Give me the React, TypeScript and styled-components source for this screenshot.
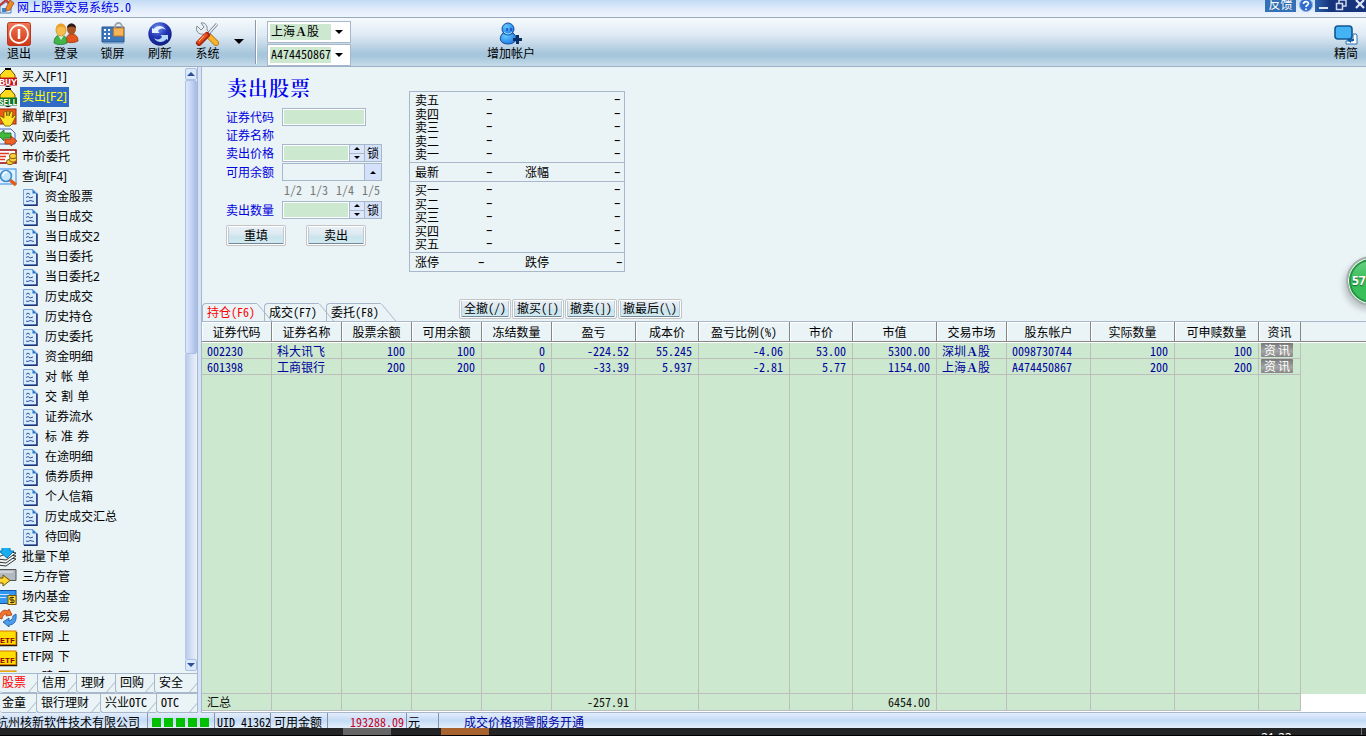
import React from 'react';
import styled, { createGlobalStyle, css } from 'styled-components';

const Global = createGlobalStyle`
  * { box-sizing: border-box; }
  body { margin: 0; overflow: hidden; }
`;

const line = '#a9b7ca';
const panel = '#eaf3f6';
const green = '#cce8cf';

const Page = styled.div`
  position: relative;
  width: 1366px;
  height: 736px;
  overflow: hidden;
  display: flex;
  flex-direction: column;
  background: ${panel};
  color: #000;
  font: 12px/16px 'Noto Sans CJK SC', sans-serif;
  white-space: pre;
`;

const Mono = styled.span`
  font-family: 'Noto Sans Mono CJK SC', 'Liberation Mono', monospace;
  line-height: 0;
`;
const WideLetter = styled.b`
  font-family: 'Noto Serif CJK SC', serif;
  line-height: 0;
`;

/* Half-width runs take exactly half the advance of a Chinese character. */
function T({ s }: { s: string }) {
  return (
    <>
      {s.split(/([\x20-\x7e]+|Ａ)/).map((p, i) => {
        if (i % 2 === 0) return p;
        return p === 'Ａ' ? <WideLetter key={i}>{p}</WideLetter> : <Mono key={i}>{p}</Mono>;
      })}
    </>
  );
}

/* ---------- title bar ---------- */
const TitleBar = styled.header`
  height: 18px;
  flex: none;
  display: flex;
  align-items: flex-start;
  background: linear-gradient(#c3dbf6, #dfebfb 50%, #f0f5fd);
  border-bottom: 1px solid #97a9bd;
  color: #0000e6;
`;
const TitleText = styled.div`
  flex: 1;
  line-height: 13px;
  margin-left: 2px;
`;
const Feedback = styled.div`
  width: 31px;
  height: 12px;
  overflow: hidden;
  background: #3470b4;
  color: #fff;
  text-align: center;
  line-height: 8px;
`;
const HelpIcon = styled.svg`
  margin: 0 2px 0 3px;
`;
const WindowButtons = styled.svg`
  background: linear-gradient(90deg, #2b62ac, #16347c 30%);
`;

/* ---------- toolbar ---------- */
const Toolbar = styled.nav`
  height: 49px;
  flex: none;
  display: flex;
  align-items: flex-start;
  background: linear-gradient(#f6fafd, #dfeaf4 35%, #a5c5db 75%, #a9c8dd 82%, #c6dbe9);
  border-bottom: 1px solid #9db0c8;
`;
const Tool = styled.div<{ $w: number }>`
  width: ${(p) => p.$w}px;
  padding-top: 4px;
  display: flex;
  flex-direction: column;
  align-items: center;
  svg { flex: none; }
  span { line-height: 14px; }
`;
const ToolSep = styled.div`
  width: 2px;
  height: 44px;
  margin: 2px 10px 0 11px;
  background: #8b99a8;
  border-right: 1px solid #fff;
`;
const Drop = styled.i<{ $size?: number; $up?: boolean; $color?: string }>`
  width: 0;
  height: 0;
  border: ${(p) => p.$size ?? 4}px solid transparent;
  ${(p) =>
    p.$up
      ? css`border-top: 0; border-bottom-color: ${p.$color ?? '#000'};`
      : css`border-bottom: 0; border-top-color: ${p.$color ?? '#000'};`}
`;
const DropSlot = styled.div`
  padding: 21px 0 0 4px;
`;
const Combos = styled.div`
  display: flex;
  flex-direction: column;
  gap: 1px;
  padding-top: 3px;
  width: 84px;
`;
const Combo = styled.div`
  height: 22px;
  display: flex;
  align-items: center;
  gap: 4px;
  padding-left: 2px;
  background: #fff;
  border: 1px solid ${line};
`;
const ComboText = styled.div`
  width: 61px;
  height: 16px;
  line-height: 14px;
  padding-left: 1px;
  background: ${green};
`;
const Gap = styled.div<{ $w?: number }>`
  ${(p) => (p.$w ? css`width: ${p.$w}px;` : css`flex: 1;`)}
`;

/* ---------- sidebar ---------- */
const Body = styled.div`
  flex: 1;
  min-height: 0;
  display: flex;
`;
const Sidebar = styled.aside`
  width: 197px;
  flex: none;
  display: flex;
  flex-direction: column;
`;
const TreeArea = styled.div`
  height: 606px;
  display: flex;
`;
const Tree = styled.div`
  flex: 1;
  height: 605px;
  overflow: hidden;
  font-family: 'Noto Sans', 'Noto Sans CJK SC', sans-serif;
`;
const Node = styled.div<{ $child?: boolean }>`
  height: 20px;
  display: flex;
  align-items: center;
  padding-left: ${(p) => (p.$child ? 23 : 0)}px;
  gap: ${(p) => (p.$child ? 5 : 2)}px;
  svg { flex: none; }
`;
const NodeText = styled.span<{ $on?: boolean }>`
  height: 20px;
  line-height: 20px;
  padding: 0 2px;
  word-spacing: 1px;
  ${(p) => p.$on && css`background: #316ac5; color: #ff0;`}
`;
const Scroll = styled.div`
  width: 12px;
  margin: 1px 0 2px;
  display: flex;
  flex-direction: column;
  background: linear-gradient(90deg, #e6ecf8, #f6f8fd);
`;
const ScrollBtn = styled.div`
  height: 12px;
  display: flex;
  align-items: center;
  justify-content: center;
  background: #dbe7fa;
  border: 1px solid #a9bfe3;
  border-radius: 2px;
`;
const Thumb = styled.div`
  height: 274px;
  background: linear-gradient(90deg, #dce8fb, #c3d3f4 55%, #a9bce4);
  border: 1px solid #a9bfe3;
  border-radius: 2px;
`;
const TrackFill = styled.div`
  flex: 1;
  background: linear-gradient(90deg, #b6c6ea, #d9e3f6 60%, #eaf0fb);
`;
const SideTabs = styled.div`
  height: 20px;
  display: flex;
  overflow: hidden;
  border-top: 1px solid ${line};
`;
const SideTab = styled.div<{ $w: number; $on?: boolean; $first?: boolean }>`
  position: relative;
  flex: none;
  width: ${(p) => p.$w}px;
  padding-left: ${(p) => (p.$first ? 2 : 4)}px;
  line-height: 16px;
  color: ${(p) => (p.$on ? '#f00' : '#000')};
  border-left: ${(p) => (p.$first ? 0 : 1)}px solid ${line};
  border-bottom: 1px solid ${line};
  border-bottom-left-radius: 3px;
  &::after {
    content: '';
    position: absolute;
    right: 4px;
    bottom: -1px;
    height: 11px;
    border-left: 1px solid ${line};
    transform: skewX(-40deg);
  }
`;
const Splitter = styled.div`
  width: 5px;
  flex: none;
  background: #d5e3fa;
  border-left: 1px solid ${line};
  border-right: 1px solid ${line};
`;

/* ---------- order form ---------- */
const Main = styled.main`
  flex: 1;
  min-width: 0;
  display: flex;
  flex-direction: column;
`;
const Top = styled.section`
  height: 232px;
  display: flex;
  align-items: flex-start;
`;
const Form = styled.div`
  width: 207px;
  padding: 9px 0 0 24px;
`;
const FormTitle = styled.h1`
  margin: 0 0 0 1px;
  height: 32px;
  font: 600 20px/24px 'Noto Serif CJK SC', 'Noto Sans CJK SC', serif;
  letter-spacing: 1px;
  color: #0000f0;
`;
const FormRow = styled.div<{ $h?: number }>`
  height: ${(p) => p.$h ?? 18}px;
  display: flex;
  align-items: center;
`;
const Label = styled.label`
  width: 56px;
  height: 18px;
  line-height: 17px;
  color: #0000e0;
`;
const Field = styled.div<{ $w: number; $plain?: boolean }>`
  width: ${(p) => p.$w}px;
  height: 18px;
  border: 1px solid ${line};
  background: ${(p) => (p.$plain ? panel : green)};
  box-shadow: ${(p) => (p.$plain ? 'none' : 'inset 0 0 0 1px #fff')};
`;
const Spin = styled.div`
  width: 15px;
  height: 18px;
  display: flex;
  flex-direction: column;
  border: 1px solid ${line};
  border-left: 0;
  background: #dce7fb;
`;
const SpinHalf = styled.div`
  flex: 1;
  display: flex;
  align-items: center;
  justify-content: center;
  & + & { border-top: 1px solid ${line}; }
`;
const Lock = styled.div`
  width: 17px;
  height: 18px;
  display: flex;
  align-items: center;
  justify-content: center;
  line-height: 14px;
  background: #d3e1fa;
  border: 1px solid ${line};
  border-left: 0;
`;
const Ratios = styled.div`
  height: 19px;
  padding-left: 58px;
  display: flex;
  gap: 8px;
  color: #777;
  ${Mono} { line-height: 16px; }
`;
const FormButtons = styled.div`
  display: flex;
  gap: 20px;
  margin-top: 6px;
`;
const Button = styled.button<{ $w: number; $h: number }>`
  width: ${(p) => p.$w}px;
  height: ${(p) => p.$h}px;
  padding: 0 0 2px;
  font: inherit;
  line-height: 14px;
  white-space: pre;
  color: #000;
  background: linear-gradient(#e9f0f6, #dbe8f0 48%, #c9e4ec 55%, #d4ebf0);
  border: 1px solid #c4c4c4;
  border-radius: 2px;
  box-shadow: inset 0 0 0 1px #fff, inset 2px 0 0 #b9cbd9, inset -2px 0 0 #b9cbd9, inset 0 -2px 0 #71889c;
`;

/* ---------- quote box ---------- */
const Quote = styled.div`
  width: 216px;
  height: 181px;
  margin-top: 24px;
  border: 1px solid ${line};
`;
const QuoteGroup = styled.div<{ $h: number }>`
  height: ${(p) => p.$h}px;
  padding: 1px 0;
  & + & { border-top: 1px solid ${line}; }
`;
const QuoteRow = styled.div<{ $h: number; $edge?: boolean }>`
  height: ${(p) => p.$h}px;
  line-height: ${(p) => (p.$h > 14 ? 16 : 13)}px;
  display: grid;
  grid-template-columns: ${(p) => (p.$edge ? '63px 47px 91px 6px' : '71px 39px 89px 6px')};
  padding-left: 5px;
`;
const Dash = styled.span`
  font-family: 'Liberation Mono', monospace;
  display: inline-block;
  width: 6px;
  text-indent: -0.5px;
  transform: translateY(1px) scaleX(1.6);
`;

/* ---------- positions table ---------- */
const TabBar = styled.div`
  height: 23px;
  display: flex;
  align-items: flex-end;
  border-bottom: 1px solid ${line};
`;
const Tab = styled.div<{ $w: number; $on?: boolean }>`
  position: relative;
  width: ${(p) => p.$w}px;
  height: 18px;
  margin-right: 7px;
  padding-left: 4px;
  line-height: 15px;
  color: ${(p) => (p.$on ? '#f00' : '#000')};
  border-top: 1px solid ${line};
  border-left: 1px solid ${line};
  border-top-left-radius: 4px;
  &::after {
    content: '';
    position: absolute;
    left: 100%;
    top: 0;
    height: 18px;
    border-right: 1px solid ${line};
    transform: skewX(40deg);
    transform-origin: top;
  }
`;
const CancelButtons = styled.div`
  margin-left: 71px;
  padding-bottom: 2px;
  display: flex;
  gap: 1px;
`;
const cols = '70px 70px 70px 70px 70px 84px 63px 91px 63px 84px 70px 84px 84px 84px 42px 1fr';
const Head = styled.div`
  height: 21px;
  flex: none;
  display: grid;
  grid-template: 20px / ${cols};
  border-bottom: 1px solid #fff;
`;
const HeadCell = styled.div<{ $last?: boolean }>`
  line-height: 19px;
  text-align: center;
  border-bottom: 1px solid #868686;
  ${(p) => !p.$last && css`border-right: 1px solid #868686; box-shadow: inset 1px 1px 0 #fff;`}
`;
const Row = styled.div<{ $h: number; $total?: boolean }>`
  height: ${(p) => p.$h}px;
  flex: none;
  display: grid;
  grid-template: ${(p) => p.$h}px / ${cols};
  background: ${green};
  color: ${(p) => (p.$total ? '#111' : '#00009c')};
`;
const Cell = styled.div<{ $left?: boolean; $blank?: boolean }>`
  line-height: 15px;
  padding: 0 6px 0 5px;
  text-align: ${(p) => (p.$left ? 'left' : 'right')};
  border-right: 1px solid #bdbdbd;
  border-bottom: 1px solid #bdbdbd;
  ${(p) => p.$blank && css`border: 0;`}
`;
const Filler = styled.div`
  background: #fff;
`;
const InfoCell = styled(Cell)`
  padding: 0 2px;
`;
const InfoButton = styled.div`
  width: 32px;
  height: 14px;
  line-height: 13px;
  padding-left: 3px;
  border-radius: 1px;
  text-align: left;
  letter-spacing: 2px;
  color: #fff;
  background: linear-gradient(#777, #a5a5a5 60%, #858585);
`;
const TableEnd = styled.div`
  height: 2px;
  background: #fff;
  border-bottom: 1px solid ${line};
`;

/* ---------- status and task bars ---------- */
const Status = styled.footer`
  height: 15px;
  flex: none;
  display: flex;
  overflow: hidden;
  line-height: 18px;
  background: linear-gradient(#e4edfc, #c4dbf5 50%, #e3eefc);
`;
const StatusCell = styled.div<{ $w: number; $pad?: number; $color?: string; $right?: boolean }>`
  width: ${(p) => p.$w}px;
  flex: none;
  overflow: hidden;
  padding-left: ${(p) => p.$pad ?? 2}px;
  padding-right: ${(p) => (p.$right ? 2 : 0)}px;
  text-align: ${(p) => (p.$right ? 'right' : 'left')};
  color: ${(p) => p.$color ?? '#000'};
  border-right: 1px solid #8494a8;
`;
const Company = styled.span`
  margin-left: -6px;
`;
const Service = styled.div`
  padding-left: 25px;
  color: #0000a0;
`;
const Signal = styled.div`
  width: 67px;
  flex: none;
  padding: 5px 0 0 4px;
  display: flex;
  gap: 3px;
  border-right: 1px solid #8494a8;
`;
const Block = styled.i`
  width: 9px;
  height: 9px;
  background: #00c000;
`;
const Taskbar = styled.div`
  height: 8px;
  flex: none;
  display: flex;
  overflow: hidden;
  background: #222426;
  border-bottom: 1px solid #000;
`;
const Task = styled.div<{ $c: string }>`
  width: 48px;
  background: ${(p) => p.$c};
`;
const Clock = styled.div`
  width: 100px;
  color: #fff;
  line-height: 19px;
  font-family: 'Noto Sans', sans-serif;
`;
const DeskEdge = styled.div`
  width: 1px;
  margin-right: 4px;
  background: #777;
`;
const Ball = styled.div`
  position: absolute;
  left: 1346px;
  top: 256px;
  width: 50px;
  height: 50px;
  padding: 15px 0 0 4px;
  border-radius: 50%;
  color: #fff;
  font: 700 12px/16px 'Open Sans', sans-serif;
  background: linear-gradient(#6fd489, #37bb57 50%, #3cc35c);
  border: 2px solid #a9b0b0;
  box-shadow: inset 0 0 0 1px #fff, inset 0 0 0 3px #239544, -2px 4px 6px #0003;
  text-shadow: 0 1px 1px #17602c;
`;

/* ---------- icons ---------- */
const AppLogo = () => (
  <svg width="15" height="14" viewBox="0 0 15 14">
    <path d="M0 6 6 2l5 4v7H0z" fill="#d9eafb" stroke="#5380b4" />
    <path d="M-1 6 6 0l3 3" fill="none" stroke="#c8352a" strokeWidth="2" />
    <path d="M2 12V8h4v4z" fill="#4282cb" />
    <path d="M6 8 10 0l4 3-4 7-4 1z" fill="#ed8c25" stroke="#9c3d11" strokeWidth=".7" />
  </svg>
);
const ExitIcon = () => (
  <svg width="24" height="24" viewBox="0 0 24 24">
    <defs><linearGradient id="ex" x1="0" y1="0" x2="0" y2="1"><stop stopColor="#f17a59" /><stop offset="1" stopColor="#cf3612" /></linearGradient></defs>
    <rect x=".5" y=".5" width="23" height="23" rx="2" fill="url(#ex)" stroke="#b9381d" />
    <circle cx="12" cy="12" r="9" fill="none" stroke="#fff" strokeWidth="1.8" />
    <path d="M12 7v10" stroke="#fff" strokeWidth="2.5" />
  </svg>
);
const UsersIcon = () => (
  <svg width="26" height="24" viewBox="0 0 26 24">
    <path d="M13 20c0-7 3-8 6-8s6 2 6 7c-3 2-9 2-12 1z" fill="#e5541a" stroke="#8c2d0a" strokeWidth=".7" />
    <ellipse cx="18.500" cy="7" rx="4.500" ry="5.500" fill="#a85524" />
    <path d="M14 6c0-6 9-6 9 0-3-2-6-2-9 0z" fill="#2b1a18" />
    <path d="M1 21c0-6 3-8 7-8s6 3 6 8c-3 2-10 2-13 0z" fill="#43b34a" stroke="#16742b" strokeWidth=".7" />
    <path d="m5 13 3 5 3-5z" fill="#dff5e0" />
    <ellipse cx="8" cy="8" rx="5" ry="6" fill="#f6bd4c" stroke="#c77c17" strokeWidth=".7" />
    <path d="M3 7c0-7 10-7 10 0-3-3-7-3-10 0z" fill="#eaa02a" />
  </svg>
);
const LockScreenIcon = () => (
  <svg width="24" height="24" viewBox="0 0 24 24">
    <path d="M1 5h22v15H1z" fill="#3d78bb" stroke="#28568f" />
    <path d="M2 21.500h21" stroke="#8ab4dc" />
    {[7, 11, 15].map((y) => <path key={y} d={`M3 ${y + 1}h2m2 0h2`} stroke="#fff" strokeWidth="2" />)}
    <path d="M14 7V4.500a3.500 3.500 0 0 1 7 0V7" fill="none" stroke="#9ca4ad" strokeWidth="1.800" />
    <rect x="12.500" y="6" width="10" height="8" fill="#f4b45a" stroke="#c67b24" />
  </svg>
);
const RefreshIcon = () => (
  <svg width="24" height="24" viewBox="0 0 24 24">
    <defs><radialGradient id="rf" cx=".4" cy=".25" r=".8"><stop stopColor="#7191ee" /><stop offset=".5" stopColor="#2335b4" /><stop offset="1" stopColor="#101a78" /></radialGradient></defs>
    <circle cx="12" cy="12" r="11.700" fill="url(#rf)" />
    <path d="M4 11 4 6l1.500 1C9 3 15 3 18 8c-3-2-6-2-8 1l1.500 2z" fill="#e3f0ff" />
    <path d="m20 13 0 5-1.500-1C15 21 9 21 6 16c3 2 6 2 8-1l-1.500-2z" fill="#b4d8fa" />
  </svg>
);
const ToolsIcon = () => (
  <svg width="25" height="24" viewBox="0 0 25 24">
    <path d="m9 9 12 12" stroke="#b66a0c" strokeWidth="6" strokeLinecap="round" />
    <path d="m14 14 7 7" stroke="#f7b52c" strokeWidth="4.500" strokeLinecap="round" />
    <path d="M2 4c-2 5 2 9 6 8l5 3 3-3-4-4c1-4-2-8-6-7l3 4-3 3z" fill="#e8edf1" stroke="#7d8995" />
    <path d="m22 2-9 10" stroke="#7e8991" strokeWidth="3" />
    <path d="m22 2-9 10" stroke="#edf3f6" strokeWidth="1.200" />
    <path d="m12 13-8 8" stroke="#a8270d" strokeWidth="6" strokeLinecap="round" />
    <path d="m11 13-7 7" stroke="#ec4e27" strokeWidth="3.500" strokeLinecap="round" />
    <path d="m9 14-5 5" stroke="#ffd067" />
  </svg>
);
const AddUserIcon = () => (
  <svg width="24" height="24" viewBox="0 0 24 24">
    <defs><radialGradient id="au" cx=".35" cy=".3" r=".8"><stop stopColor="#63c8ff" /><stop offset="1" stopColor="#1673e2" /></radialGradient></defs>
    <path d="M4 11c-5 5-3 11 5 11s11-6 5-11z" fill="url(#au)" stroke="#174e9d" />
    <circle cx="9" cy="7" r="6" fill="url(#au)" stroke="#174e9d" />
    <path d="M8 6v3m4-3v3" stroke="#1c49b8" strokeWidth="1.500" />
    <path d="M5 10q4 4 8 0" stroke="#9ae2ff" fill="none" />
    <path d="M14 17.500h9M18.500 13v9" stroke="#0b2f62" strokeWidth="3" />
  </svg>
);
const CompactIcon = () => (
  <svg width="24" height="24" viewBox="0 0 24 24">
    <path d="M14 19h5V12h3l1 1v9H12v-3z" fill="#fff" stroke="#246eb1" />
    <path d="m13 18 4-4v3h3v2h-3v2z" fill="#1360aa" />
    <rect x="1" y="4" width="17" height="13" rx="3" fill="#43b3f5" stroke="#13568f" strokeWidth="1.600" />
  </svg>
);
const DocIcon = () => (
  <svg width="15" height="17" viewBox="0 0 15 17">
    <path d="M.5.500h9.500l3.500 3.500v12H.5z" fill="#d9ecfd" stroke="#6f9fd4" />
    <path d="M14 4.500V16.300H1" stroke="#1d3378" strokeWidth="1.500" fill="none" />
    <path d="M9.500.500V4.500h4z" fill="#2675cc" />
    <path d="M3 5.500 5 4l2 1.500M3 8.500l2-1 2 1.500 3-1M3 12l2 .5 2-1 4 1" stroke="#34549c" fill="none" />
  </svg>
);
const MoneyBag = ({ sell }: { sell?: boolean }) => (
  <svg width="18" height="19" viewBox="0 0 18 19">
    <path d="M0 11V7l6-6h4l5 6v4z" fill="#ffd91b" stroke="#6a4d00" />
    <path d="M5 1h6" stroke="#000" strokeWidth="2" />
    <path d="M5 19q3-2 6 0z" fill="#000" />
    <rect x="-1" y="9.500" width="18" height="8" fill={sell ? '#0b7424' : '#c3141c'} />
    <text x="-1" y="16.500" fontSize="8.500" fontWeight="700" fontFamily="Liberation Mono" textLength="18" lengthAdjust="spacingAndGlyphs" fill="#fff">{sell ? 'SELL' : 'BUY'}</text>
  </svg>
);
const HandIcon = () => (
  <svg width="18" height="19" viewBox="0 0 18 19">
    <rect x="-1" y="1" width="17" height="15" fill="#f05a17" stroke="#9e2507" />
    <path d="M3 15-.5 9l1-1L4 10V4l2-1 1 5V3h2v5l2-5 2 1-1 6 3-3 1 1-4 8-2 2H5z" fill="#ffe529" stroke="#695300" strokeWidth=".8" />
  </svg>
);
const TwoWayIcon = () => (
  <svg width="18" height="19" viewBox="0 0 18 19">
    <path d="M-1 1h12l4 4v11H-1z" fill="#e9f2ff" stroke="#4b62b5" />
    <path d="m-2 7 6-5v3h7v5H4v3z" fill="#42b83c" stroke="#187020" strokeWidth=".8" />
    <path d="m17 13-6-5v3H5v5h6v2z" fill="#ee6325" stroke="#983008" strokeWidth=".8" />
  </svg>
);
const MarketIcon = () => (
  <svg width="18" height="19" viewBox="0 0 18 19">
    <rect x="-1" y="2" width="17" height="13" fill="#fff" stroke="#a31515" strokeWidth="1.600" />
    <path d="M0 5.500h9M0 8.500h6M0 11.500h5" stroke="#de3a24" strokeWidth="1.300" />
    {[14, 11.5, 8].map((y) => <ellipse key={y} cx={y > 12 ? 10 : 13} cy={y} rx="3.600" ry="2.700" fill="#f9cd3b" stroke="#87600c" />)}
  </svg>
);
const SearchIcon = () => (
  <svg width="18" height="19" viewBox="0 0 18 19">
    <rect x="-1" y="1" width="17" height="15" fill="#e3f1ff" stroke="#2c8bed" />
    <path d="m10 12 6 5" stroke="#e45b13" strokeWidth="3.500" />
    <circle cx="6" cy="8" r="5.500" fill="#c5e8ff" stroke="#418bc9" strokeWidth="1.600" />
    <path d="M3 8q0-4 4-4" stroke="#fff" strokeWidth="1.500" fill="none" />
  </svg>
);
const BatchIcon = () => (
  <svg width="18" height="19" viewBox="0 0 18 19">
    {[17, 14, 11].map((y) => <path key={y} d={`M-2 ${y}l8 1 10-7-5-1-13 5z`} fill="#eef3f5" stroke="#222" strokeWidth=".9" />)}
    <path d="M2-1h8v4h4L7 10-1 3h3z" fill="#18aef0" stroke="#0878b3" />
  </svg>
);
const BankIcon = () => (
  <svg width="18" height="19" viewBox="0 0 18 19">
    <path d="M-1 1.500h17v11H-1z" fill="#b3b9c0" stroke="#555" />
    <path d="M0 4h13" stroke="#eee" />
    <path d="M-2 10h5V7l7 5.500-7 5.500v-3h-5z" fill="#ffd631" stroke="#6f5200" />
  </svg>
);
const FundIcon = () => (
  <svg width="18" height="19" viewBox="0 0 18 19">
    <rect x="-1" y="2.500" width="17" height="13" fill="#3397f2" stroke="#14519e" />
    <path d="M0 6.500h9M0 9.500h6" stroke="#c8e6ff" />
    <rect x="8" y="7.500" width="8" height="9" fill="#ffe24a" stroke="#815900" />
    <path d="M14 9.500h-4v2.500h4v2.500h-4M12 8.500v7" stroke="#4a3600" fill="none" />
  </svg>
);
const OtherIcon = () => (
  <svg width="18" height="19" viewBox="0 0 18 19">
    <path d="M-1 10C0 3 4 1 8 3l1-2 3 6-6 1 1-2c-3 0-4 1-5 5z" fill="#f3742b" stroke="#ac360c" strokeWidth=".8" />
    <path d="M16 6c1 7-2 11-7 11l0 2-6-5 6-4v3c3-1 4-3 4-5z" fill="#4a9cec" stroke="#18549f" strokeWidth=".8" />
  </svg>
);
const EtfIcon = () => (
  <svg width="18" height="19" viewBox="0 0 18 19">
    <path d="M0 17.500h16.500V4" stroke="#2a1800" strokeWidth="1.400" fill="none" />
    <rect x="-1" y="3" width="17" height="13.500" fill="#ffdf00" stroke="#d47a00" />
    <text x="0" y="14.500" fontSize="8" fontWeight="700" fontFamily="Liberation Mono" textLength="15" lengthAdjust="spacingAndGlyphs" fill="#8f0000">ETF</text>
  </svg>
);

/* ---------- data ---------- */
const tree: [string, React.ReactNode, boolean?][] = [
  ['买入[F1]', <MoneyBag />],
  ['卖出[F2]', <MoneyBag sell />, true],
  ['撤单[F3]', <HandIcon />],
  ['双向委托', <TwoWayIcon />],
  ['市价委托', <MarketIcon />],
  ['查询[F4]', <SearchIcon />],
];
const queries = ['资金股票', '当日成交', '当日成交2', '当日委托', '当日委托2', '历史成交', '历史持仓', '历史委托', '资金明细', '对 帐 单', '交 割 单', '证券流水', '标 准 券', '在途明细', '债券质押', '个人信箱', '历史成交汇总', '待回购'];
const rest: [string, React.ReactNode, boolean?][] = [
  ['批量下单', <BatchIcon />],
  ['三方存管', <BankIcon />],
  ['场内基金', <FundIcon />],
  ['其它交易', <OtherIcon />],
  ['ETF网 上', <EtfIcon />],
  ['ETF网 下', <EtfIcon />],
  ['ETF赎 回', <EtfIcon />],
];
const headers = ['证券代码', '证券名称', '股票余额', '可用余额', '冻结数量', '盈亏', '成本价', '盈亏比例(%)', '市价', '市值', '交易市场', '股东帐户', '实际数量', '可申赎数量', '资讯'];
const rows = [
  ['002230', '科大讯飞', '100', '100', '0', '-224.52', '55.245', '-4.06', '53.00', '5300.00', '深圳Ａ股', '0098730744', '100', '100'],
  ['601398', '工商银行', '200', '200', '0', '-33.39', '5.937', '-2.81', '5.77', '1154.00', '上海Ａ股', 'A474450867', '200', '200'],
];
const totals: Record<number, string> = { 0: '汇总', 5: '-257.91', 9: '6454.00' };
const leftCols = [0, 1, 10, 11];

const Branch = ({ items }: { items: typeof tree }) => (
  <>
    {items.map(([t, icon, on]) => (
      <Node key={t}>{icon}<NodeText $on={on}>{t}</NodeText></Node>
    ))}
  </>
);
const Spinner = () => (
  <>
    <Spin>
      <SpinHalf><Drop $size={3} $up /></SpinHalf>
      <SpinHalf><Drop $size={3} /></SpinHalf>
    </Spin>
    <Lock>锁</Lock>
  </>
);
const Levels = ({ names }: { names: string[] }) => (
  <QuoteGroup $h={names[0] === '卖五' ? 70 : 71}>
    {names.map((n) => (
      <QuoteRow key={n} $h={13.5}><span>{n}</span><Dash>-</Dash><span /><Dash>-</Dash></QuoteRow>
    ))}
  </QuoteGroup>
);

export default function App() {
  return (
    <Page>
      <Global />
      <TitleBar>
        <AppLogo />
        <TitleText><T s="网上股票交易系统5.0" /></TitleText>
        <Feedback>反馈</Feedback>
        <HelpIcon width="14" height="13" viewBox="0 0 14 13">
          <circle cx="7" cy="5" r="6.500" fill="#2f6cc9" stroke="#8fb3e2" />
          <path d="M4.500 4c0-3 5-3 5-.5C9.500 5 7 5 7 7M7 8.500v1.500" stroke="#fff" strokeWidth="1.700" fill="none" />
        </HelpIcon>
        <WindowButtons width="51" height="12" viewBox="0 0 51 12">
          <path d="M4 8h9" stroke="#dfe7f3" strokeWidth="2" />
          <path d="M24 3V0h7v6h-3M21.500 3.500h6v6h-6z" stroke="#cdd8ea" strokeWidth="1.500" fill="none" />
          <path d="m41 0 8 8m0-8-8 8" stroke="#dfe7f3" strokeWidth="2.200" />
        </WindowButtons>
      </TitleBar>

      <Toolbar>
        <Tool $w={38}><ExitIcon /><span>退出</span></Tool>
        <Gap $w={4} />
        <Tool $w={48}><UsersIcon /><span>登录</span></Tool>
        <Tool $w={45}><LockScreenIcon /><span>锁屏</span></Tool>
        <Tool $w={50}><RefreshIcon /><span>刷新</span></Tool>
        <Tool $w={45}><ToolsIcon /><span>系统</span></Tool>
        <DropSlot><Drop as="div" $size={5} /></DropSlot>
        <ToolSep />
        <Combos>
          <Combo><ComboText><T s="上海Ａ股" /></ComboText><Drop /></Combo>
          <Combo><ComboText><T s="A474450867" /></ComboText><Drop /></Combo>
        </Combos>
        <Gap $w={130} />
        <Tool $w={60}><AddUserIcon /><span>增加帐户</span></Tool>
        <Gap />
        <Tool $w={40}><CompactIcon /><span>精简</span></Tool>
      </Toolbar>

      <Body>
        <Sidebar>
          <TreeArea>
            <Tree>
              <Branch items={tree} />
              {queries.map((q) => (
                <Node key={q} $child><DocIcon /><NodeText>{q}</NodeText></Node>
              ))}
              <Branch items={rest} />
            </Tree>
            <Scroll>
              <ScrollBtn><Drop $up $color="#2a4f94" /></ScrollBtn>
              <Thumb />
              <TrackFill />
              <ScrollBtn><Drop $color="#2a4f94" /></ScrollBtn>
            </Scroll>
          </TreeArea>
          <SideTabs>
            <SideTab $w={37} $on $first>股票</SideTab>
            <SideTab $w={39}>信用</SideTab>
            <SideTab $w={39}>理财</SideTab>
            <SideTab $w={39}>回购</SideTab>
            <SideTab $w={44}>安全</SideTab>
          </SideTabs>
          <SideTabs>
            <SideTab $w={36} $first>金童</SideTab>
            <SideTab $w={64}>银行理财</SideTab>
            <SideTab $w={56}><T s="兴业OTC" /></SideTab>
            <SideTab $w={42}><T s="OTC" /></SideTab>
          </SideTabs>
        </Sidebar>
        <Splitter />
        <Main>
          <Top>
            <Form>
              <FormTitle>卖出股票</FormTitle>
              <FormRow><Label>证券代码</Label><Field $w={84} /></FormRow>
              <FormRow><Label>证券名称</Label></FormRow>
              <FormRow><Label>卖出价格</Label><Field $w={68} /><Spinner /></FormRow>
              <FormRow $h={20}><Label>可用余额</Label><Field $w={83} $plain /><Lock><Drop $size={3} $up /></Lock></FormRow>
              <Ratios>{['1/2', '1/3', '1/4', '1/5'].map((r) => <Mono key={r}>{r}</Mono>)}</Ratios>
              <FormRow><Label>卖出数量</Label><Field $w={68} /><Spinner /></FormRow>
              <FormButtons>
                <Button $w={60} $h={21}>重填</Button>
                <Button $w={60} $h={21}>卖出</Button>
              </FormButtons>
            </Form>
            <Quote>
              <Levels names={['卖五', '卖四', '卖三', '卖二', '卖一']} />
              <QuoteGroup $h={19}>
                <QuoteRow $h={17}><span>最新</span><Dash>-</Dash><span>涨幅</span><Dash>-</Dash></QuoteRow>
              </QuoteGroup>
              <Levels names={['买一', '买二', '买三', '买四', '买五']} />
              <QuoteGroup $h={19}>
                <QuoteRow $h={17} $edge><span>涨停</span><Dash>-</Dash><span>跌停</span><Dash>-</Dash></QuoteRow>
              </QuoteGroup>
            </Quote>
          </Top>
          <TabBar>
            <Tab $w={55} $on><T s="持仓(F6)" /></Tab>
            <Tab $w={55}><T s="成交(F7)" /></Tab>
            <Tab $w={55}><T s="委托(F8)" /></Tab>
            <CancelButtons>
              <Button $w={52} $h={20}><T s="全撤(/)" /></Button>
              <Button $w={52} $h={20}><T s="撤买([)" /></Button>
              <Button $w={52} $h={20}><T s="撤卖(])" /></Button>
              <Button $w={64} $h={20}><T s="撤最后(\)" /></Button>
            </CancelButtons>
          </TabBar>
          <Head>
            {headers.map((h) => <HeadCell key={h}><T s={h} /></HeadCell>)}
            <HeadCell $last />
          </Head>
          {rows.map((r) => (
            <Row key={r[0]} $h={16}>
              {r.map((v, i) => <Cell key={i} $left={leftCols.includes(i)}><T s={v} /></Cell>)}
              <InfoCell><InfoButton>资讯</InfoButton></InfoCell>
              <Cell $blank />
            </Row>
          ))}
          <Row $h={319}>
            {headers.map((h) => <Cell key={h} />)}
            <Cell $blank />
          </Row>
          <Row $h={17} $total>
            {headers.map((h, i) => (
              <Cell key={h} $left={i === 0}>{totals[i] && <T s={totals[i]} />}</Cell>
            ))}
            <Filler />
          </Row>
          <TableEnd />
        </Main>
      </Body>

      <Status>
        <StatusCell $w={148}><Company>杭州核新软件技术有限公司</Company></StatusCell>
        <Signal>{[0, 1, 2, 3, 4].map((i) => <Block key={i} />)}</Signal>
        <StatusCell $w={56}><T s="UID_41362" /></StatusCell>
        <StatusCell $w={57} $pad={3}>可用金额</StatusCell>
        <StatusCell $w={79} $color="#c8001e" $right><T s="193288.09" /></StatusCell>
        <StatusCell $w={32} $pad={1}>元</StatusCell>
        <Service>成交价格预警服务开通</Service>
      </Status>
      <Taskbar>
        <Gap $w={343} />
        <Task $c="#666" />
        <Gap $w={50} />
        <Task $c="#a8622d" />
        <Gap />
        <Clock>21:22</Clock>
        <DeskEdge />
      </Taskbar>
      <Ball>57</Ball>
    </Page>
  );
}
